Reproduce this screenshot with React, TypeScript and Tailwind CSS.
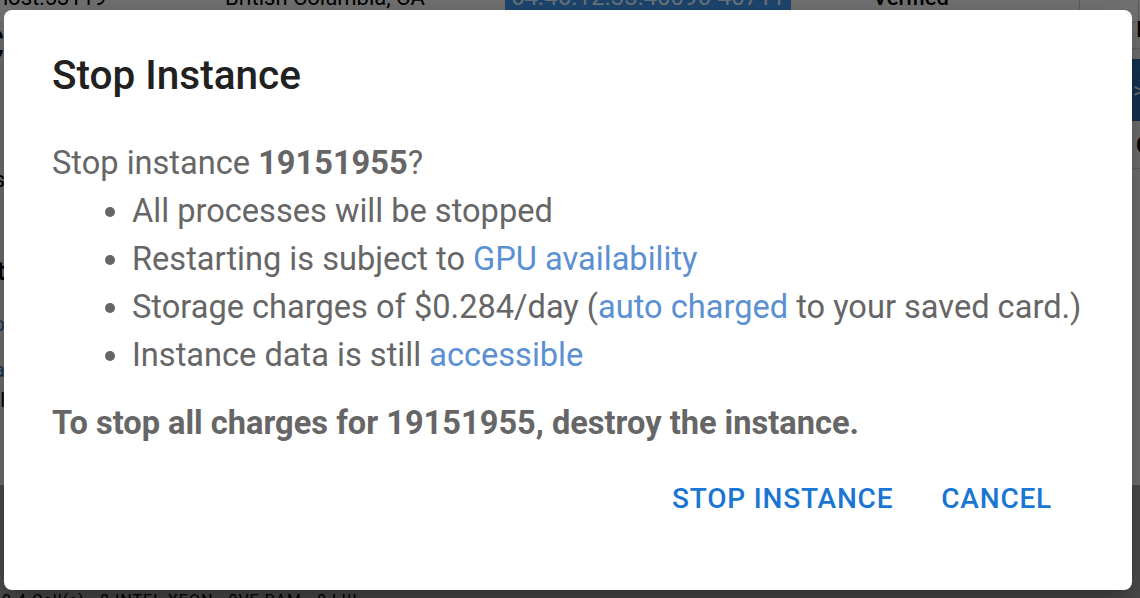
function PageBehind() {
    return (
        <div className="flex flex-col h-full text-black">
            <div className="flex-1 flex flex-col">
                {/* table row that is cut by the top of the window */}
                <div className="-mt-[17px] h-[28px] flex items-center text-[22px] whitespace-nowrap">
                    <span className="-ml-[4px] w-[229px]">host:53119</span>
                    <span className="w-[280px]">British Columbia, CA</span>
                    <span className="w-[286px] h-full flex items-center justify-center bg-[#3d8fe0] text-[#d8e8fa] text-[24px]">
                        64.46.12.33:40096-40711
                    </span>
                    <span className="ml-[82px] font-medium">Verified</span>
                    <span className="ml-[130px] w-[60px] h-[30px] mt-[22px] rounded border border-[#bdbdbd]"></span>
                </div>

                <div className="flex-1 flex">
                    {/* left column, only its right edge shows */}
                    <div className="w-[5px] flex flex-col items-end whitespace-nowrap">
                        <span className="mt-[8px] text-[48px] leading-[52px]">C</span>
                        <span className="mt-[92px] text-[22px]">rentals</span>
                        <span className="mt-[56px] text-[26px] font-bold">Cost</span>
                        <span className="mt-[18px] text-[20px] text-[#2f6db5]">info</span>
                        <span className="mt-[16px] text-[20px] text-[#2f6db5]">data</span>
                        <span className="text-[20px]">Label</span>
                    </div>
                    <div className="flex-1"></div>
                    {/* right column, only its left edge shows */}
                    <div className="w-[9px] flex flex-col whitespace-nowrap">
                        <div className="h-[38px] border-b border-[#c8c8c8] flex items-center pl-[5px] text-[22px] font-medium">
                            IP
                        </div>
                        <div className="mt-[10px] h-[62px] bg-[#2f6aa8] flex items-center pl-[2px] text-[22px] text-[#dbe8f5]">
                            &gt;
                        </div>
                        <div className="h-[48px] border-b border-[#c8c8c8] flex items-center pl-[5px] text-[24px] font-bold">
                            C
                        </div>
                    </div>
                </div>
            </div>

            {/* darker lower panel */}
            <div className="h-[113px] bg-[#9c9c9c] flex flex-col">
                <div className="mt-[74px] w-[4px] h-[1px] bg-black"></div>
                <div className="mt-[34px] pl-[2px] text-[16px] leading-[16px] whitespace-nowrap tracking-[1px]">
                    0 4 Cell(s)  · 8 INTEL XEON · 8VE RAM · 8 LIII
                </div>
            </div>
        </div>
    );
}

function StopDialog() {
    return (
        <div className="w-[1128px] h-[580px] bg-white rounded-[8px] shadow-[0_11px_15px_-7px_rgba(0,0,0,0.2),0_24px_38px_3px_rgba(0,0,0,0.14),0_9px_46px_8px_rgba(0,0,0,0.12)] flex flex-col">
            <h2 className="pt-[33px] px-[48px] text-[40.5px] leading-[64px] font-medium text-[#212121]">
                Stop Instance
            </h2>

            <div className="px-[48px] pt-[32px] text-[32.6px] leading-[48px] text-[#666666]">
                <p>
                    Stop instance <b className="font-bold">19151955</b>?
                </p>
                <ul className="list-disc pl-[80px]">
                    <li>All processes will be stopped</li>
                    <li>
                        Restarting is subject to{" "}
                        <a className="text-[#5b90d3] cursor-pointer">GPU availability</a>
                    </li>
                    <li>
                        Storage charges of $0.284/day (
                        <a className="text-[#5b90d3] cursor-pointer">auto charged</a> to your saved card.)
                    </li>
                    <li>
                        Instance data is still{" "}
                        <a className="text-[#5b90d3] cursor-pointer">accessible</a>
                    </li>
                </ul>
                <p className="mt-[20px] font-bold">
                    To stop all charges for 19151955, destroy the instance.
                </p>
            </div>

            <div className="flex justify-end gap-[16px] pr-[64px] pt-[15px]">
                <button className="px-[16px] py-[12px] min-w-[128px] text-[28px] leading-[49px] font-medium tracking-[0.8px] uppercase text-[#1976d2] rounded">
                    Stop Instance
                </button>
                <button className="px-[16px] py-[12px] min-w-[128px] text-[28px] leading-[49px] font-medium tracking-[0.8px] uppercase text-[#1976d2] rounded">
                    Cancel
                </button>
            </div>
        </div>
    );
}

export default function App() {
    return (
        <div className="relative w-[1140px] h-[598px] overflow-hidden bg-[#e6e6e6] font-['Roboto',sans-serif]">
            <PageBehind />
            <div className="absolute inset-0 bg-black/50 flex items-start pl-[4px] pt-[10px]">
                <StopDialog />
            </div>
        </div>
    );
}
